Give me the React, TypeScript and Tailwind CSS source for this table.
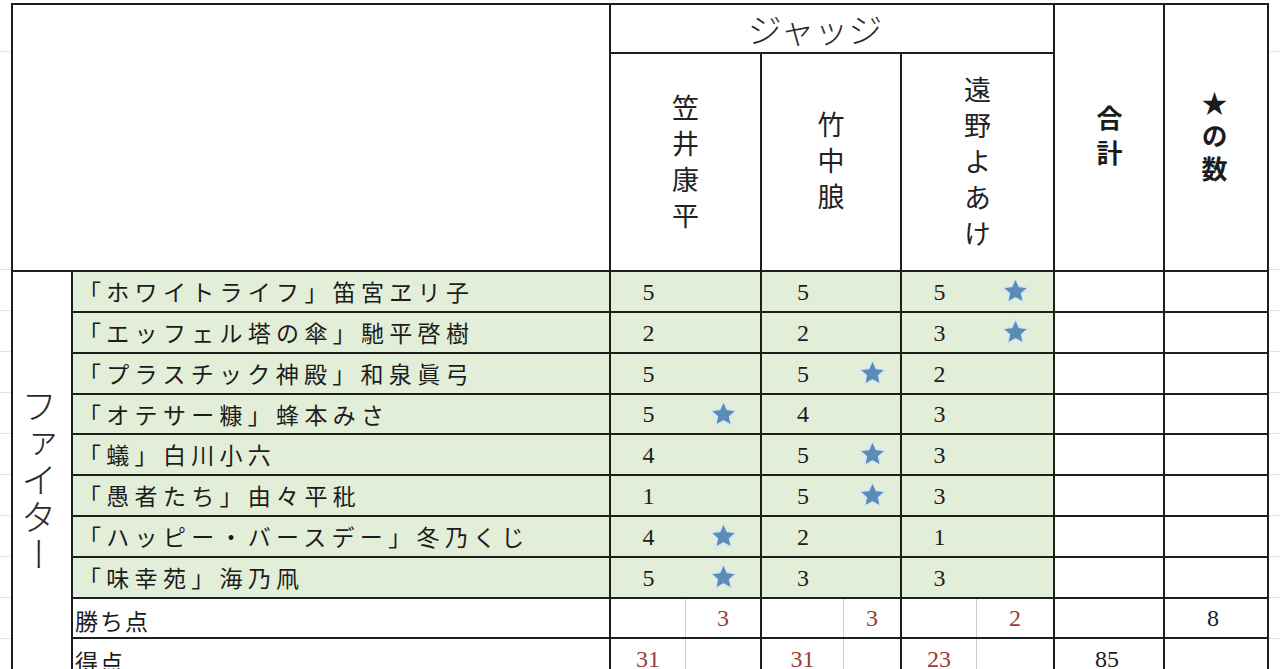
import React from 'react';

type Row = { name: string; s: [number, boolean][] };

const rows: Row[] = [
  { name: '「ホワイトライフ」笛宮ヱリ子', s: [[5, false], [5, false], [5, true]] },
  { name: '「エッフェル塔の傘」馳平啓樹', s: [[2, false], [2, false], [3, true]] },
  { name: '「プラスチック神殿」和泉眞弓', s: [[5, false], [5, true], [2, false]] },
  { name: '「オテサー糠」蜂本みさ', s: [[5, true], [4, false], [3, false]] },
  { name: '「蟻」白川小六', s: [[4, false], [5, true], [3, false]] },
  { name: '「愚者たち」由々平秕', s: [[1, false], [5, true], [3, false]] },
  { name: '「ハッピー・バースデー」冬乃くじ', s: [[4, true], [2, false], [1, false]] },
  { name: '「味幸苑」海乃凧', s: [[5, true], [3, false], [3, false]] },
];

const leftW = ['w-[75px]', 'w-[82px]', 'w-[75px]'];

const JP = { fontFamily: '"Noto Sans CJK JP", "Noto Sans", sans-serif' };
const NUM = { fontFamily: '"Liberation Serif", "DejaVu Serif", serif' };

function Star() {
  return (
    <svg width="31" height="31" viewBox="0 0 24 24" className="block">
      <path
        d="M12 1.8l2.95 6.4 6.95.75-5.2 4.7 1.5 6.85L12 16.95 5.8 20.5l1.5-6.85-5.2-4.7 6.95-.75z"
        fill="#5b8cb6"
        stroke="#d3e8f6"
        strokeWidth="1.1"
        strokeLinejoin="round"
      />
    </svg>
  );
}

function JudgeCell({
  idx,
  left,
  right,
  green,
  split,
  redLeft,
  redRight,
}: {
  idx: number;
  left?: React.ReactNode;
  right?: React.ReactNode;
  green: boolean;
  split: boolean;
  redLeft?: boolean;
  redRight?: boolean;
}) {
  return (
    <div className={`flex h-full ${green ? 'bg-[#e3eed9]' : 'bg-white'}`}>
      <div
        className={`${leftW[idx]} h-full flex items-center justify-center text-[24px] ${
          split ? 'border-r border-[#cfcfcf]' : ''
        } ${redLeft ? 'text-[#9c3a3a]' : 'text-[#1c1c1c]'}`}
        style={NUM}
      >
        {left}
      </div>
      <div
        className={`flex-1 h-full flex items-center justify-center text-[24px] ${
          redRight ? 'text-[#9c3a3a]' : 'text-[#1c1c1c]'
        }`}
        style={NUM}
      >
        {right}
      </div>
    </div>
  );
}

function Gutter() {
  const hs = [52, 218, 41, 41, 41, 41, 41, 41, 41, 41, 41, 41];
  return (
    <div className="flex flex-col">
      {hs.map((h, i) => (
        <div key={i} className="border-b border-[#e2e2e2]" style={{ height: h }} />
      ))}
    </div>
  );
}

export default function App() {
  return (
    <div className="w-[1280px] h-[669px] overflow-hidden bg-white flex text-[#1c1c1c]" style={JP}>
      <div className="w-[11px] shrink-0">
        <Gutter />
      </div>
      <div className="mt-[3px] shrink-0">
        <div className="grid bg-[#1e1e1e] p-[2px] gap-[2px] grid-cols-[58px_536px_149px_138px_151px_108px_102px] grid-rows-[47px_216px_39px_39px_39px_38px_39px_39px_39px_39px_38px_40px]">
          {/* header */}
          <div className="col-span-2 row-span-2 bg-white" />
          <div className="col-span-3 bg-white flex items-center justify-center pr-[34px] text-[34px] leading-none text-[#2a2a2a] font-light">
            ジャッジ
          </div>
          <div className="row-span-2 bg-white flex items-center justify-center">
            <div className="[writing-mode:vertical-rl] text-[26px] font-bold tracking-[9px] leading-none pt-[4px]">
              合計
            </div>
          </div>
          <div className="row-span-2 bg-white flex items-center justify-center">
            <div className="[writing-mode:vertical-rl] text-[26px] font-bold tracking-[7px] leading-none pt-[4px] pr-[4px]">
              ★の数
            </div>
          </div>
          {['笠井康平', '竹中朖', '遠野よあけ'].map((n, i) => (
            <div key={n} className="bg-white flex items-center justify-center">
              <div
                className={`[writing-mode:vertical-rl] text-[27px] leading-none text-[#222] tracking-[9px] ${
                  i === 1 ? 'pt-[6px]' : 'pt-[8px]'
                }`}
              >
                {n}
              </div>
            </div>
          ))}

          {/* fighter label */}
          <div className="row-span-10 bg-white flex items-center justify-center pr-[6px]">
            <div className="[writing-mode:vertical-rl] text-[36px] leading-none font-light tracking-[1px] text-[#2a2a2a] pt-[10px]">
              ファイター
            </div>
          </div>

          {rows.map((r) => (
            <React.Fragment key={r.name}>
              <div className="bg-[#e3eed9] flex items-center pl-[5px] text-[23px] tracking-[5.3px] whitespace-nowrap leading-none">
                {r.name}
              </div>
              {r.s.map(([v, st], i) => (
                <JudgeCell key={i} idx={i} green split={false} left={v} right={st ? <Star /> : null} />
              ))}
              <div className="bg-white" />
              <div className="bg-white" />
            </React.Fragment>
          ))}

          {/* 勝ち点 */}
          <div className="bg-white flex items-center pl-[2px] pt-[4px] text-[23px] tracking-[2px] leading-none">
            勝ち点
          </div>
          <JudgeCell idx={0} green={false} split right={3} redRight />
          <JudgeCell idx={1} green={false} split right={3} redRight />
          <JudgeCell idx={2} green={false} split right={2} redRight />
          <div className="bg-white" />
          <div className="bg-white flex items-center justify-center pr-[6px] text-[24px]" style={NUM}>
            8
          </div>

          {/* 得点 */}
          <div className="bg-white flex items-center pl-[2px] pt-[4px] text-[23px] tracking-[2px] leading-none">
            得点
          </div>
          <JudgeCell idx={0} green={false} split left={31} redLeft />
          <JudgeCell idx={1} green={false} split left={31} redLeft />
          <JudgeCell idx={2} green={false} split left={23} redLeft />
          <div className="bg-white flex items-center justify-center pr-[4px] text-[24px]" style={NUM}>
            85
          </div>
          <div className="bg-white" />
        </div>
      </div>
      <div className="flex-1">
        <Gutter />
      </div>
    </div>
  );
}
